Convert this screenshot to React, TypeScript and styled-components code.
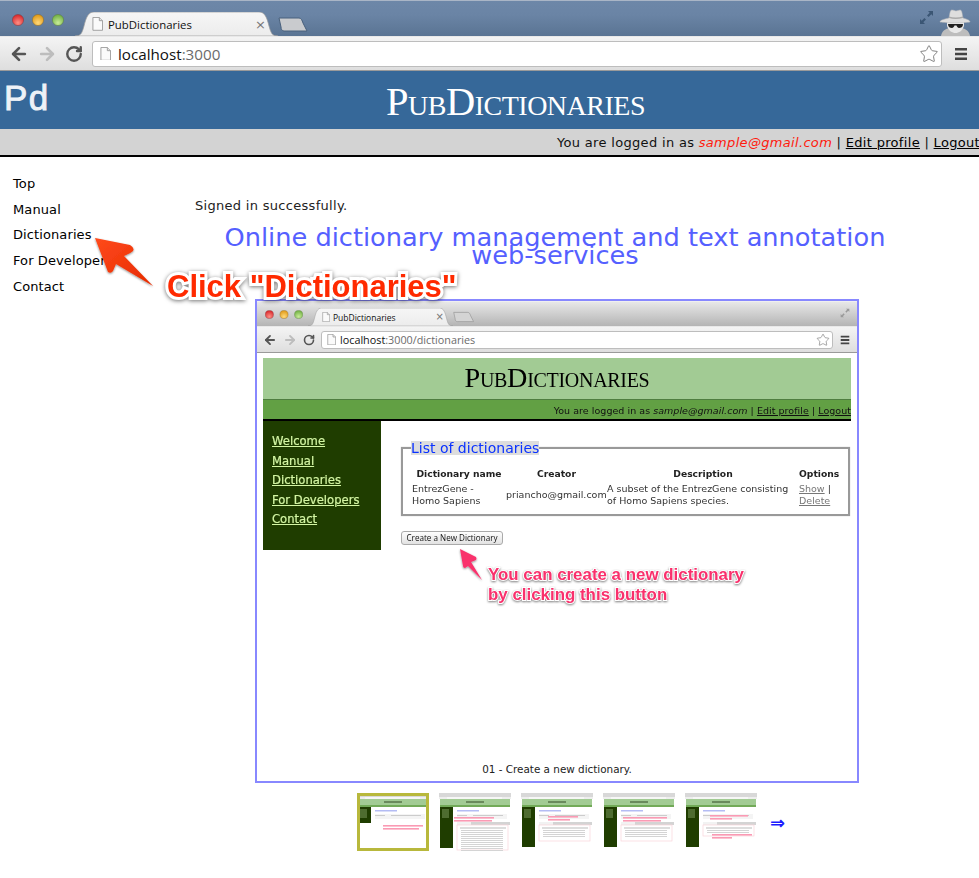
import React from "react";
import styled, { createGlobalStyle } from "styled-components";
import { ArrowLeft, ArrowRight, RotateCw, Star } from "lucide-react";

const Global = createGlobalStyle`
  html, body { margin: 0; padding: 0; background: #fff; }
  body { font-family: "DejaVu Sans", Verdana, sans-serif; }
  * { box-sizing: border-box; }
`;

const Root = styled.div`
  position: relative;
  width: 979px;
  height: 878px;
  overflow: hidden;
  background: #fff;
  color: #111;
`;

/* ---------- browser chrome (full size and miniature) ---------- */
const Strip = styled.div<{ $mini?: boolean }>`
  display: flex;
  align-items: flex-end;
  flex: none;
  height: ${(p) => (p.$mini ? 25 : 36)}px;
  padding: ${(p) => (p.$mini ? "0 7px 0 8px" : "0 7px 0 12px")};
  background: ${(p) =>
    p.$mini
      ? "linear-gradient(#e8e8e8, #b4b4b4)"
      : "linear-gradient(#6d87a8 0, #6a84a5 40%, #5a7493 100%)"};
  border-top: 1px solid ${(p) => (p.$mini ? "#f0f0f0" : "#a9b5c6")};
`;

const Lights = styled.svg<{ $mini?: boolean }>`
  flex: none;
  width: ${(p) => (p.$mini ? 38 : 52)}px;
  height: ${(p) => (p.$mini ? 9 : 12)}px;
  align-self: flex-start;
  margin-top: ${(p) => (p.$mini ? 8 : 13)}px;
`;

const Tab = styled.div<{ $mini?: boolean }>`
  position: relative;
  flex: none;
  display: flex;
  align-items: center;
  width: ${(p) => (p.$mini ? 145 : 203)}px;
  height: ${(p) => (p.$mini ? 18 : 24)}px;
  margin-left: ${(p) => (p.$mini ? 5 : 11)}px;
  padding: ${(p) => (p.$mini ? "0 9px 0 14px" : "0 12px 0 17px")};
  gap: ${(p) => (p.$mini ? 3 : 5)}px;
`;

const TabShape = styled.svg`
  position: absolute;
  left: 0;
  top: 0;
  width: 100%;
  height: 100%;
`;

const TabTitle = styled.span<{ $mini?: boolean }>`
  position: relative;
  flex: 1;
  font-family: "Open Sans", "DejaVu Sans", sans-serif;
  font-size: ${(p) => (p.$mini ? 8.5 : 11.4)}px;
  color: #111;
  white-space: nowrap;
`;

const TabClose = styled.span<{ $mini?: boolean }>`
  position: relative;
  font-family: "DejaVu Sans", sans-serif;
  font-size: ${(p) => (p.$mini ? 10 : 13)}px;
  line-height: 1;
  color: #777;
`;

const NewTab = styled.svg<{ $mini?: boolean }>`
  flex: none;
  width: ${(p) => (p.$mini ? 22 : 31)}px;
  height: ${(p) => (p.$mini ? 12 : 15)}px;
  margin-bottom: ${(p) => (p.$mini ? 3 : 4)}px;
`;

const StripEnd = styled.div<{ $mini?: boolean }>`
  margin-left: auto;
  display: flex;
  align-items: flex-end;
  gap: 5px;
  align-self: stretch;
`;

const Fullscreen = styled.svg<{ $mini?: boolean }>`
  width: ${(p) => (p.$mini ? 10 : 15)}px;
  height: ${(p) => (p.$mini ? 10 : 15)}px;
  align-self: flex-start;
  margin-top: ${(p) => (p.$mini ? 6 : 9)}px;
`;

const Spy = styled.svg`
  width: 33px;
  height: 28px;
`;

const Toolbar = styled.div<{ $mini?: boolean }>`
  display: flex;
  align-items: center;
  flex: none;
  height: ${(p) => (p.$mini ? 27 : 35)}px;
  padding: ${(p) => (p.$mini ? "0 7px 0 6px" : "0 11px 0 9px")};
  gap: ${(p) => (p.$mini ? 6 : 8)}px;
  background: linear-gradient(#f4f4f4, #dedede);
  border-bottom: 1px solid #9a9a9a;
  border-top: 1px solid #e8e8e8;
  color: #555;
`;

const Omnibox = styled.div<{ $mini?: boolean }>`
  flex: 1;
  display: flex;
  align-items: center;
  height: ${(p) => (p.$mini ? 18 : 26)}px;
  margin: ${(p) => (p.$mini ? "0 1px 0 0" : "0 4px 0 1px")};
  padding: ${(p) => (p.$mini ? "0 2px 0 5px" : "0 2px 0 7px")};
  gap: ${(p) => (p.$mini ? 4 : 7)}px;
  background: #fff;
  border: 1px solid #bdbdbd;
  border-radius: 3px;
`;

const Url = styled.span<{ $mini?: boolean }>`
  flex: 1;
  font-family: "Open Sans", "DejaVu Sans", sans-serif;
  font-size: ${(p) => (p.$mini ? 10.8 : 15.2)}px;
  color: #111;
  white-space: nowrap;
`;

const UrlRest = styled.span`
  color: #6b6b6b;
`;

const Menu = styled.svg<{ $mini?: boolean }>`
  flex: none;
  width: ${(p) => (p.$mini ? 10 : 14)}px;
  height: ${(p) => (p.$mini ? 10 : 14)}px;
`;

const Favicon = ({ size }: { size: number }) => (
  <svg width={size} height={size * 1.25} viewBox="0 0 12 15" style={{ position: "relative", flex: "none" }}>
    <path d="M1 .5h7l3.5 3.5v10.5H1z" fill="#fafafa" stroke="#9a9a9a" />
    <path d="M8 .5V4h3.5" fill="#e4e4e4" stroke="#9a9a9a" />
  </svg>
);

const Chrome = ({ mini, rest, host }: { mini?: boolean; rest: string; host: string }) => {
  const ic = mini ? 14 : 20;
  const g = mini ? "m" : "f";
  return (
    <>
      <Strip $mini={mini}>
        <Lights $mini={mini} viewBox="0 0 52 12">
          <defs>
            <radialGradient id={`r${g}`} cy=".75" r=".7"><stop offset="0" stopColor="#ff8f85" /><stop offset="1" stopColor="#d8282c" /></radialGradient>
            <radialGradient id={`o${g}`} cy=".75" r=".7"><stop offset="0" stopColor="#ffd97a" /><stop offset="1" stopColor="#e09a18" /></radialGradient>
            <radialGradient id={`n${g}`} cy=".75" r=".7"><stop offset="0" stopColor="#c8ec98" /><stop offset="1" stopColor="#72b044" /></radialGradient>
          </defs>
          <circle cx="6" cy="6" r="5.6" fill={`url(#r${g})`} stroke="#7d3a40" strokeWidth=".5" />
          <circle cx="26" cy="6" r="5.6" fill={`url(#o${g})`} stroke="#8a6a2a" strokeWidth=".5" />
          <circle cx="46" cy="6" r="5.6" fill={`url(#n${g})`} stroke="#5a7d40" strokeWidth=".5" />
        </Lights>
        <Tab $mini={mini}>
          <TabShape viewBox="0 0 203 24" preserveAspectRatio="none">
            <defs>
              <linearGradient id={mini ? "tm" : "tb"} x1="0" y1="0" x2="0" y2="1">
                <stop offset="0" stopColor="#f6f6f6" />
                <stop offset="1" stopColor="#ececec" />
              </linearGradient>
            </defs>
            <path
              d="M0 24C6 24 7 21 9 14C11 6 13 0 19 0H184C190 0 192 6 194 14C196 21 197 24 203 24Z"
              fill={`url(#${mini ? "tm" : "tb"})`}
              stroke="#9a9a9a"
              strokeWidth=".7"
            />
          </TabShape>
          <Favicon size={mini ? 8 : 11} />
          <TabTitle $mini={mini}>PubDictionaries</TabTitle>
          <TabClose $mini={mini}>×</TabClose>
        </Tab>
        <NewTab $mini={mini} viewBox="0 0 31 15">
          <path d="M1 1H21C23 1 24 3 25 6L29 14H6C4 14 3 12 3 10Z" fill={mini ? "#d4d4d4" : "#c9cbce"} stroke={mini ? "#999" : "#48607c"} />
        </NewTab>
        <StripEnd $mini={mini}>
          <Fullscreen $mini={mini} viewBox="0 0 15 15">
            <path d="M9 1h5v5l-1.7-1.7L9.600 7 8 5.400l2.700-2.700zM6 14H1V9l1.700 1.700L5.400 8 7 9.600l-2.700 2.700z" fill={mini ? "#9a9a9a" : "#3b5674"} />
          </Fullscreen>
          {!mini && (
            <Spy viewBox="0 0 33 28">
              <path d="M2 28c1-5 4-7 8-8h13c4 1 7 3 8 8z" fill="#bdbdbd" />
              <path d="M8 12h17v6c-2 5-5 7-8.500 7S10 23 8 18z" fill="#e8e8e8" />
              <path d="M10 10c1-5 1-8 3-8 2 0 3 1 4 1s3-1 4-1c2 0 2 3 3 8 3 1 7 2 7 4-6 1-25 1-30 0 0-2 5-3 9-4z" fill="#dedede" stroke="#bbb" strokeWidth=".5" />
              <path d="M10 8.500c4 1.200 9 1.200 14 0v1.500c-5 1.200-10 1.200-14 0z" fill="#aaa" />
              <path d="M9 16h15c0 3-2 4-4 4-1 0-2-1-2.500-2.500h-2C15 19 14 20 13 20c-2 0-4-1-4-4z" fill="#222" />
            </Spy>
          )}
        </StripEnd>
      </Strip>
      <Toolbar $mini={mini}>
        <ArrowLeft size={ic} strokeWidth={3.2} />
        <ArrowRight size={ic} strokeWidth={3.2} color="#bdbdbd" />
        <RotateCw size={ic - 2} strokeWidth={3.2} />
        <Omnibox $mini={mini}>
          <Favicon size={mini ? 9 : 11} />
          <Url $mini={mini}>
            {host}
            <UrlRest>{rest}</UrlRest>
          </Url>
          <Star size={mini ? 14 : 20} strokeWidth={1.1} color="#777" />
        </Omnibox>
        <Menu $mini={mini} viewBox="0 0 14 14">
          <path d="M1 1h12v2.600H1zM1 5.700h12v2.600H1zM1 10.400h12V13H1z" fill="#444" />
        </Menu>
      </Toolbar>
    </>
  );
};

/* ---------- application page ---------- */
const Header = styled.header`
  display: flex;
  align-items: center;
  height: 58px;
  background: #366899;
  color: #fff;
`;

const Logo = styled.div`
  flex: none;
  width: 52px;
  padding: 0 0 4px 4px;
  font-family: "Liberation Sans", Arial, sans-serif;
  font-size: 35px;
  letter-spacing: 1.5px;
  -webkit-text-stroke: 0.9px #eef2f7;
  color: #eef2f7;
`;

const Title = styled.h1`
  flex: 1;
  margin: 0;
  padding-top: 4px;
  text-align: center;
  font-family: "Liberation Serif", "Times New Roman", serif;
  font-variant: small-caps;
  font-weight: normal;
  font-size: 40.5px;
  line-height: 54px;
  letter-spacing: -0.5px;
`;

const UserBar = styled.div`
  display: flex;
  justify-content: flex-end;
  align-items: center;
  height: 26px;
  margin-right: -1px;
  background: #d3d3d3;
  font-size: 13px;
  letter-spacing: 0.32px;
  white-space: pre;
`;

const UserBarWrap = styled.div`
  overflow: hidden;
  background: #d3d3d3;
  border-bottom: 2px solid #000;
`;

const Mail = styled.em`
  color: #ff1a0d;
`;

const BarLink = styled.a`
  color: #000;
  text-decoration: underline;
`;

const Body = styled.div`
  display: flex;
`;

const Side = styled.nav`
  flex: none;
  width: 195px;
  padding: 14px 0 0 13px;
  display: flex;
  flex-direction: column;
`;

const SideItem = styled.a`
  height: 25.7px;
  line-height: 25.7px;
  font-size: 13px;
  letter-spacing: 0.1px;
  color: #000;
  white-space: nowrap;
`;

const Main = styled.main`
  width: 720px;
  flex: none;
  padding-top: 41px;
`;

const Flash = styled.p`
  margin: 0;
  font-size: 13px;
  letter-spacing: 0.3px;
  line-height: 16px;
  color: #222;
`;

const Lead = styled.h2`
  margin: 14px 0 0;
  text-align: center;
  font-family: "DejaVu Sans", sans-serif;
  font-weight: normal;
  font-size: 25.65px;
  line-height: 18px;
  color: #5560ff;
`;

const Frame = styled.section`
  display: flex;
  flex-direction: column;
  width: 604px;
  height: 484px;
  margin: 35px 0 0 60px;
  border: 2px solid #8888ff;
  background: #fff;
`;

const Caption = styled.div`
  flex: none;
  height: 21px;
  line-height: 18px;
  text-align: center;
  font-size: 10.4px;
  color: #222;
`;

/* ---------- page inside the slide ---------- */
const MiniPage = styled.div`
  flex: 1;
  margin: 5px 6px 0;
  filter: blur(0.25px);
`;

const MiniHeader = styled.div`
  height: 42px;
  line-height: 40px;
  background: #a2cb94;
  border-bottom: 1px solid #4f7d40;
  text-align: center;
  font-family: "Liberation Serif", serif;
  font-variant: small-caps;
  font-size: 28.2px;
  letter-spacing: -0.3px;
  color: #000;
`;

const MiniBar = styled.div`
  height: 21px;
  line-height: 22px;
  background: #62a044;
  border-bottom: 2px solid #000;
  text-align: right;
  font-size: 9.5px;
  letter-spacing: 0.04px;
  color: #111;
  white-space: pre;
`;

const MiniLink = styled.a`
  color: #111;
  text-decoration: underline;
`;

const MiniBody = styled.div`
  display: flex;
  align-items: flex-start;
`;

const MiniSide = styled.div`
  flex: none;
  display: flex;
  flex-direction: column;
  width: 118px;
  height: 129px;
  padding: 11px 0 0 9px;
  background: #1f3d00;
`;

const MiniSideLink = styled.a`
  height: 19.5px;
  line-height: 19.5px;
  font-size: 11.6px;
  -webkit-text-stroke: 0.2px #d4f6a4;
  color: #d4f6a4;
  text-decoration: underline;
`;

const MiniMain = styled.div`
  flex: 1;
  padding: 20px 1px 0 20px;
`;

const Fields = styled.fieldset`
  margin: 0;
  padding: 0 0 4px 9px;
  height: 75px;
  border: 2px solid #999;
  box-shadow: 0 0 1px #bbb;
`;

const Legend = styled.legend`
  margin-left: -1px;
  padding: 0;
  background: #ddd;
  font-size: 14px;
  line-height: 14px;
  color: #0a32ff;
`;

const Grid = styled.table`
  border-collapse: collapse;
  width: 433px;
  margin-top: 13px;
  table-layout: fixed;
  font-size: 9.5px;
  line-height: 12.3px;
  color: #333;
`;

const Th = styled.th<{ $start?: boolean }>`
  padding: 0 0 3px;
  font-size: 9.2px;
  line-height: 12px;
  color: #222;
  text-align: ${(p) => (p.$start ? "left" : "center")};
`;

const Td = styled.td`
  padding: 0;
  vertical-align: middle;
`;

const Muted = styled.a`
  color: #777;
  text-decoration: underline;
`;

const NewButton = styled.button`
  display: block;
  width: 102px;
  height: 14px;
  margin-top: 15px;
  padding: 0;
  background: linear-gradient(#fefefe, #e2e2e2);
  border: 1px solid #aaa;
  border-radius: 3px;
  font-family: "Open Sans", "DejaVu Sans", sans-serif;
  font-size: 8.1px;
  line-height: 10px;
  color: #111;
`;

/* ---------- thumbnails ---------- */
const Thumbs = styled.div`
  display: flex;
  align-items: center;
  gap: 10px;
  margin: 10px 0 0 162px;
`;

const ThumbBox = styled.div<{ $on?: boolean }>`
  position: relative;
  flex: none;
  width: 72px;
  height: 58px;
  &::after {
    content: "";
    display: ${(p) => (p.$on ? "block" : "none")};
    position: absolute;
    inset: 0;
    border: 3px solid #b8b83c;
  }
`;

const ThumbArt = styled.svg`
  display: block;
  filter: blur(0.5px);
`;

const NextArrow = styled.span`
  margin-left: 3px;
  font-family: "DejaVu Sans", sans-serif;
  font-size: 18px;
  font-weight: bold;
  color: #1a1aff;
`;

type T = { side: number; pink: [number, number, number][]; rows: number; top: number };
const thumbData: T[] = [
  { side: 30, pink: [[26, 32, 40], [26, 35, 36]], rows: 2, top: 0 },
  { side: 55, pink: [[15, 24, 40], [15, 27, 38]], rows: 12, top: 32 },
  { side: 54, pink: [[27, 23, 30], [27, 26, 22]], rows: 4, top: 32 },
  { side: 54, pink: [[20, 24, 44], [20, 27, 38]], rows: 4, top: 32 },
  { side: 54, pink: [[25, 22, 38], [25, 25, 22], [27, 41, 40], [27, 44, 20]], rows: 2, top: 32 },
];

const Thumb = ({ d, on }: { d: T; on?: boolean }) => (
  <ThumbBox $on={on}>
    <ThumbArt width="72" height="58" viewBox="0 0 72 58">
      <rect width="72" height="58" fill="#fff" />
      <rect width="72" height="4" fill="#d8d8d8" />
      <rect y="4" width="72" height="2" fill="#eee" />
      <rect x="8" y="4.500" width="55" height="1" fill="#fff" />
      <rect x="1" y="6" width="70" height="6" fill="#a2cb94" />
      <rect x="27" y="8" width="18" height="2" fill="#6a8a5c" />
      <rect x="1" y="12" width="70" height="2" fill="#72aa58" />
      <rect x="1" y="14" width="13" height={d.side - 14} fill="#1f3d00" />
      <rect x="3" y="16" width="7" height="9" fill="#4e6c30" />
      <rect x="18" y="17" width="22" height="1.500" fill="#b4bcf4" />
      <rect x="18" y="21" width="50" height="5" fill="#f4f4f4" />
      <rect x="18" y="22" width="10" height="1" fill="#ccc" />
      <rect x="34" y="22" width="30" height="1" fill="#ccc" />
      {d.top > 0 && (
        <>
          <rect x="18" y="29" width="53" height="3" fill="#d4d4d4" />
          <rect x="18" y="29" width="14" height="3" fill="#f2f2f2" />
          <rect x="18" y={d.top} width="51" height={Math.min(d.rows * 2.500 + 6, 25)} fill="#fff" stroke="#f8d4da" strokeWidth=".7" />
          <rect x="21" y={d.top + 2} width="46" height="2" fill="#ddd" />
          {Array.from({ length: d.rows }, (_, i) => (
            <rect key={i} x="22" y={d.top + 5 + i * 2} width="42" height="1" fill="#d4d4d4" />
          ))}
        </>
      )}
      {d.pink.map(([x, y, w], i) => (
        <rect key={i} x={x} y={y} width={w} height="1.600" fill="#fa9ab4" />
      ))}
    </ThumbArt>
  </ThumbBox>
);

/* ---------- annotations lying over the page ---------- */
const ArrowArt = styled.svg`
  position: absolute;
  left: 0;
  top: 0;
  width: 979px;
  height: 878px;
  pointer-events: none;
`;

const ClickNote = styled.div`
  position: absolute;
  left: 167px;
  top: 267px;
  font-family: "Liberation Sans", Arial, sans-serif;
  font-size: 31px;
  line-height: 40px;
  font-weight: bold;
  white-space: nowrap;
  color: #ff2a00;
  -webkit-text-stroke: 6px #fff;
  paint-order: stroke fill;
  filter: drop-shadow(0 1px 2px rgba(0, 0, 0, 0.55));
`;

const PinkNote = styled.div`
  position: absolute;
  left: 488px;
  top: 565px;
  font-family: "Liberation Sans", Arial, sans-serif;
  font-size: 16.9px;
  line-height: 20px;
  font-weight: bold;
  white-space: nowrap;
  color: #f9306c;
  -webkit-text-stroke: 2px #fff;
  paint-order: stroke fill;
  filter: drop-shadow(0 1px 1px rgba(0, 0, 0, 0.5));
`;

export default function App() {
  return (
    <Root>
      <Global />
      <Chrome host="localhost" rest=":3000" />
      <Header>
        <Logo>Pd</Logo>
        <Title>PubDictionaries</Title>
      </Header>
      <UserBarWrap>
        <UserBar>
          You are logged in as <Mail>sample@gmail.com</Mail> | <BarLink>Edit profile</BarLink> | <BarLink>Logout</BarLink>
        </UserBar>
      </UserBarWrap>
      <Body>
        <Side>
          <SideItem>Top</SideItem>
          <SideItem>Manual</SideItem>
          <SideItem>Dictionaries</SideItem>
          <SideItem>For Developers</SideItem>
          <SideItem>Contact</SideItem>
        </Side>
        <Main>
          <Flash>Signed in successfully.</Flash>
          <Lead>Online dictionary management and text annotation web-services</Lead>
          <Frame>
            <Chrome mini host="localhost" rest=":3000/dictionaries" />
            <MiniPage>
              <MiniHeader>PubDictionaries</MiniHeader>
              <MiniBar>
                You are logged in as <em>sample@gmail.com</em> | <MiniLink>Edit profile</MiniLink> | <MiniLink>Logout</MiniLink>
              </MiniBar>
              <MiniBody>
                <MiniSide>
                  <MiniSideLink>Welcome</MiniSideLink>
                  <MiniSideLink>Manual</MiniSideLink>
                  <MiniSideLink>Dictionaries</MiniSideLink>
                  <MiniSideLink>For Developers</MiniSideLink>
                  <MiniSideLink>Contact</MiniSideLink>
                </MiniSide>
                <MiniMain>
                  <Fields>
                    <Legend>List of dictionaries</Legend>
                    <Grid>
                      <colgroup>
                        <col width="94" />
                        <col width="101" />
                        <col width="192" />
                        <col width="46" />
                      </colgroup>
                      <thead>
                        <tr>
                          <Th>Dictionary name</Th>
                          <Th>Creator</Th>
                          <Th>Description</Th>
                          <Th $start>Options</Th>
                        </tr>
                      </thead>
                      <tbody>
                        <tr>
                          <Td>EntrezGene -<br />Homo Sapiens</Td>
                          <Td>priancho@gmail.com</Td>
                          <Td>A subset of the EntrezGene consisting<br />of Homo Sapiens species.</Td>
                          <Td><Muted>Show</Muted> |<br /><Muted>Delete</Muted></Td>
                        </tr>
                      </tbody>
                    </Grid>
                  </Fields>
                  <NewButton>Create a New Dictionary</NewButton>
                </MiniMain>
              </MiniBody>
            </MiniPage>
            <Caption>01 - Create a new dictionary.</Caption>
          </Frame>
          <Thumbs>
            {thumbData.map((d, i) => (
              <Thumb key={i} d={d} on={i === 0} />
            ))}
            <NextArrow>⇒</NextArrow>
          </Thumbs>
        </Main>
      </Body>
      <ArrowArt viewBox="0 0 979 878">
        <defs>
          <linearGradient id="red" x1="0" y1="0" x2="1" y2="1">
            <stop offset="0" stopColor="#ff4a1c" />
            <stop offset="1" stopColor="#e62a00" />
          </linearGradient>
          <filter id="sh" x="-20%" y="-20%" width="140%" height="140%">
            <feDropShadow dx="0" dy="1" stdDeviation="1.2" floodOpacity=".45" />
          </filter>
        </defs>
        <path
          d="M95 238L130 245Q135 248 133 251Q131 253 124 256L153 286L116 264L113 271Q111 274 108 272Z"
          fill="url(#red)"
          filter="url(#sh)"
        />
        <path
          d="M460 549L476 557Q477 559 476 560L471 562L482 580L468 566L465 568Q463 568 463 566Z"
          fill="#f9306c"
          filter="url(#sh)"
        />
      </ArrowArt>
      <ClickNote>Click "Dictionaries"</ClickNote>
      <PinkNote>
        You can create a new dictionary
        <br />
        by clicking this button
      </PinkNote>
    </Root>
  );
}
